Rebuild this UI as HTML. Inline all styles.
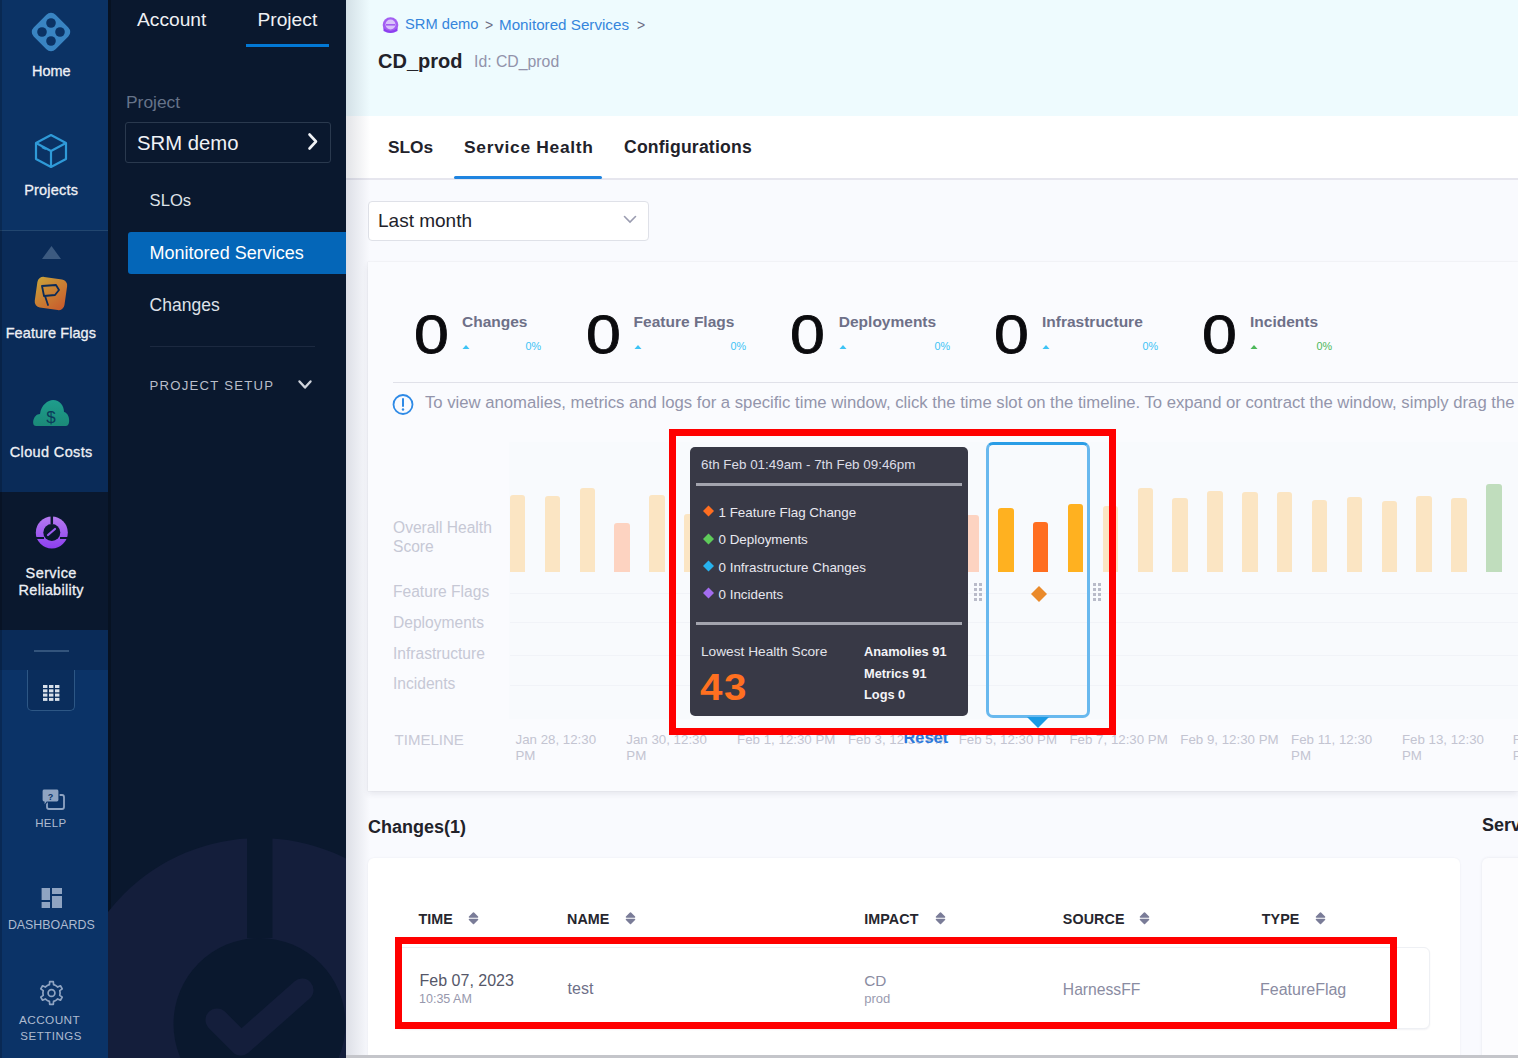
<!DOCTYPE html>
<html><head><meta charset="utf-8">
<style>
html,body{margin:0;padding:0;}
body{width:1518px;height:1058px;position:relative;overflow:hidden;background:#f9fafe;font-family:"Liberation Sans",sans-serif;}
.t{position:absolute;white-space:nowrap;}
.r{position:absolute;box-sizing:border-box;}
svg{position:absolute;overflow:visible;}
</style></head><body>

<div class="r" style="left:0px;top:0px;width:108px;height:230px;background:#0b3264"></div>
<div class="r" style="left:0px;top:230px;width:108px;height:1px;background:#22466f"></div>
<div class="r" style="left:0px;top:231px;width:108px;height:261px;background:#0a2b58"></div>
<div class="r" style="left:0px;top:492px;width:108px;height:138px;background:#0a182e"></div>
<div class="r" style="left:0px;top:630px;width:108px;height:40px;background:#0a2b58"></div>
<div class="r" style="left:0px;top:670px;width:108px;height:388px;background:#0b3367"></div>
<div class="r" style="left:0px;top:0px;width:2px;height:1058px;background:rgba(0,0,0,0.18)"></div>
<svg style="left:0;top:0px" width="108" height="120" viewBox="0 0 108 120">
<g transform="translate(51,32) rotate(45)">
<rect x="-15.5" y="-15.5" width="31" height="31" rx="6.5" fill="#3984c2"/>
</g>
<circle cx="51" cy="23" r="4.8" fill="#0b3264"/>
<circle cx="42" cy="32" r="4.8" fill="#0b3264"/>
<circle cx="60" cy="32" r="4.8" fill="#0b3264"/>
<circle cx="51" cy="41" r="4.8" fill="#0b3264"/>
</svg>
<div class="t" style="left:32.0px;top:63.7px;font-size:14.5px;line-height:14.5px;color:#eef0f5;font-weight:400;letter-spacing:0px;-webkit-text-stroke:0.3px #eef0f5">Home</div>
<svg style="left:0;top:120px" width="108" height="60" viewBox="0 120 108 60">
<g fill="none" stroke="#2f9ad8" stroke-width="2.2" stroke-linejoin="round">
<path d="M51 135 L66 143 L66 159 L51 167 L36 159 L36 143 Z"/>
<path d="M36 143 L51 151 L66 143 M51 151 L51 167"/>
<path d="M42 147 L46 149"/>
</g></svg>
<div class="t" style="left:24.2px;top:183.4px;font-size:14.5px;line-height:14.5px;color:#eef0f5;font-weight:400;letter-spacing:0.2px;-webkit-text-stroke:0.3px #eef0f5">Projects</div>
<svg style="left:0;top:240px" width="108" height="30" viewBox="0 240 108 30"><path d="M42 259 L51.5 246 L61 259 Z" fill="#3c5a80"/></svg>
<svg style="left:0;top:270px" width="108" height="45" viewBox="0 270 108 45">
<defs><linearGradient id="ffg" x1="0" y1="0" x2="1" y2="1"><stop offset="0" stop-color="#c9a43a"/><stop offset="1" stop-color="#c9582c"/></linearGradient></defs>
<g transform="translate(51,293) rotate(8)"><rect x="-15" y="-15" width="30" height="31" rx="6" fill="url(#ffg)"/></g>
<g fill="none" stroke="#0b2b58" stroke-width="1.8" stroke-linejoin="round" stroke-linecap="round">
<path d="M42 286 L56 285 L59 290 L55 295 L44 296 Z"/><path d="M45 296 L48 305"/>
</g></svg>
<div class="t" style="left:5.7px;top:325.9px;font-size:14.5px;line-height:14.5px;color:#eef0f5;font-weight:400;letter-spacing:0.07px;-webkit-text-stroke:0.3px #eef0f5">Feature Flags</div>
<svg style="left:0;top:395px" width="108" height="35" viewBox="0 395 108 35">
<defs><linearGradient id="ccg" x1="0" y1="0" x2="0" y2="1"><stop offset="0" stop-color="#1f9d8c"/><stop offset="1" stop-color="#1b8a78"/></linearGradient></defs>
<path d="M36 426 C31 426 33 414 40 414 C41 405 48 400 53 400 C60 400 64 406 64 412 C70 413 71 426 66 426 Z" fill="url(#ccg)"/>
<text x="51" y="423" text-anchor="middle" font-family="Liberation Sans" font-size="17" fill="#0b3a5a" font-weight="400">$</text>
</svg>
<div class="t" style="left:9.8px;top:445.3px;font-size:14.5px;line-height:14.5px;color:#eef0f5;font-weight:400;letter-spacing:0.35px;-webkit-text-stroke:0.3px #eef0f5">Cloud Costs</div>
<svg style="left:0;top:510px" width="108" height="45" viewBox="0 510 108 45">
<defs><linearGradient id="srg" x1="0" y1="0" x2="0" y2="1"><stop offset="0" stop-color="#b57bf0"/><stop offset="1" stop-color="#8d3ff0"/></linearGradient></defs>
<circle cx="51.8" cy="532.5" r="16" fill="url(#srg)"/>
<circle cx="51.8" cy="532.5" r="8.5" fill="#0a182e"/>
<path d="M51.8 516 L51.8 524" stroke="#0a182e" stroke-width="2.5"/>
<path d="M36 538 L44 538 M60 538 L68 538" stroke="#0a182e" stroke-width="2"/>
<path d="M48 535 L55 529" stroke="#9c5cf0" stroke-width="2.2" stroke-linecap="round"/>
</svg>
<div class="t" style="left:25.6px;top:565.5px;font-size:14.5px;line-height:14.5px;color:#eef0f5;font-weight:400;letter-spacing:0.4px;-webkit-text-stroke:0.3px #eef0f5">Service</div>
<div class="t" style="left:18.5px;top:582.7px;font-size:14.5px;line-height:14.5px;color:#eef0f5;font-weight:400;letter-spacing:0.3px;-webkit-text-stroke:0.3px #eef0f5">Reliability</div>
<div class="r" style="left:34px;top:650px;width:35px;height:2px;background:#33547c"></div>
<div class="r" style="left:27px;top:670px;width:48px;height:41px;border:1px solid #2d5785;border-top:none;border-radius:0 0 5px 5px;background:#0a2d5c"></div>
<svg style="left:0;top:680px" width="108" height="30" viewBox="0 680 108 30"><g fill="#d8e0ea"><rect x="43" y="685.0" width="4.4" height="3" /><rect x="49" y="685.0" width="4.4" height="3" /><rect x="55" y="685.0" width="4.4" height="3" /><rect x="43" y="689.3" width="4.4" height="3" /><rect x="49" y="689.3" width="4.4" height="3" /><rect x="55" y="689.3" width="4.4" height="3" /><rect x="43" y="693.6" width="4.4" height="3" /><rect x="49" y="693.6" width="4.4" height="3" /><rect x="55" y="693.6" width="4.4" height="3" /><rect x="43" y="697.9" width="4.4" height="3" /><rect x="49" y="697.9" width="4.4" height="3" /><rect x="55" y="697.9" width="4.4" height="3" /></g></svg>
<svg style="left:0;top:785px" width="108" height="30" viewBox="0 785 108 30">
<path d="M47 795 L62 795 Q64 795 64 797 L64 807 Q64 809 62 809 L49 809 Q47 809 47 807 Z" fill="none" stroke="#8fa4c2" stroke-width="1.8"/>
<path d="M44 789 L57 789 Q59 789 59 791 L59 800 Q59 802 57 802 L47 802 L44 806 L44 802 Q42 802 42 800 L42 791 Q42 789 44 789 Z" fill="#8fa4c2" stroke="#0b3367" stroke-width="1.2"/>
<text x="50.5" y="799.5" text-anchor="middle" font-family="Liberation Sans" font-size="9" font-weight="700" fill="#0b3367">?</text>
</svg>
<div class="t" style="left:35.2px;top:817.9px;font-size:11.5px;line-height:11.5px;color:#aebbd0;font-weight:400;letter-spacing:0.3px">HELP</div>
<svg style="left:0;top:885px" width="108" height="30" viewBox="0 885 108 30"><g fill="#8fa4c2">
<rect x="41.6" y="888" width="8.4" height="12"/><rect x="52" y="888" width="10" height="6"/>
<rect x="52" y="896" width="10" height="12"/><rect x="41.6" y="902" width="8.4" height="6"/></g></svg>
<div class="t" style="left:7.9px;top:918.5px;font-size:12.4px;line-height:12.4px;color:#aebbd0;font-weight:400;">DASHBOARDS</div>
<svg style="left:0;top:978px" width="108" height="30" viewBox="0 978 108 30">
<path d="M47.20 985.55 L49.42 984.66 L49.70 981.64 L53.30 981.64 L53.58 984.66 L55.80 985.55 L57.69 987.03 L60.44 985.76 L62.24 988.88 L59.77 990.63 L60.10 993.00 L59.77 995.37 L62.24 997.12 L60.44 1000.24 L57.69 998.97 L55.80 1000.45 L53.58 1001.34 L53.30 1004.36 L49.70 1004.36 L49.42 1001.34 L47.20 1000.45 L45.31 998.97 L42.56 1000.24 L40.76 997.12 L43.23 995.37 L42.90 993.00 L43.23 990.63 L40.76 988.88 L42.56 985.76 L45.31 987.03 Z" fill="none" stroke="#8fa4c2" stroke-width="1.7" stroke-linejoin="round"/>
<circle cx="51.5" cy="993" r="3.4" fill="none" stroke="#8fa4c2" stroke-width="1.7"/></svg>
<div class="t" style="left:19.0px;top:1014.8px;font-size:11.8px;line-height:11.8px;color:#aebbd0;font-weight:400;letter-spacing:0.4px">ACCOUNT</div>
<div class="t" style="left:20.3px;top:1031.1px;font-size:11.5px;line-height:11.5px;color:#aebbd0;font-weight:400;letter-spacing:0.5px">SETTINGS</div>
<div class="r" style="left:108px;top:0px;width:238px;height:1058px;background:#0a182e"></div>
<div class="r" style="left:108px;top:0px;width:3px;height:1058px;background:rgba(0,0,0,0.25)"></div>
<svg style="left:108px;top:780px" width="238" height="278" viewBox="108 780 238 278">
<defs><clipPath id="sbclip"><rect x="108" y="780" width="238" height="278"/></clipPath></defs>
<g clip-path="url(#sbclip)">
<circle cx="259.5" cy="1030" r="192" fill="#141e3b"/>
<rect x="247" y="820" width="25.5" height="118" fill="#0a182e"/>
<circle cx="259.5" cy="1024" r="86" fill="#0a182e"/>
<path d="M217 1020 L241 1044 L302 990" fill="none" stroke="#141e3b" stroke-width="23" stroke-linecap="round" stroke-linejoin="round"/>
</g></svg>
<div class="t" style="left:137.0px;top:10.2px;font-size:19.2px;line-height:19.2px;color:#eef0f4;font-weight:400;">Account</div>
<div class="t" style="left:257.5px;top:10.2px;font-size:19.2px;line-height:19.2px;color:#eef0f4;font-weight:400;">Project</div>
<div class="r" style="left:246px;top:44px;width:83px;height:3px;background:#0278d5"></div>
<div class="t" style="left:126.0px;top:94.0px;font-size:17.4px;line-height:17.4px;color:#667389;font-weight:400;">Project</div>
<div class="r" style="left:125px;top:122px;width:206px;height:41px;border:1px solid #2a394e;border-radius:3px"></div>
<div class="t" style="left:137.0px;top:132.8px;font-size:20.3px;line-height:20.3px;color:#f0f2f6;font-weight:400;">SRM demo</div>
<svg style="left:300px;top:130px" width="24" height="24" viewBox="300 130 24 24"><path d="M309.5 134.5 L316 141.5 L309.5 148.5" fill="none" stroke="#f0f2f6" stroke-width="2.6" stroke-linecap="round" stroke-linejoin="round"/></svg>
<div class="t" style="left:149.6px;top:192.9px;font-size:16.6px;line-height:16.6px;color:#dfe2e8;font-weight:400;">SLOs</div>
<div class="r" style="left:128px;top:232px;width:218px;height:42px;background:#0466b8;border-radius:3px 0 0 3px"></div>
<div class="t" style="left:149.6px;top:244.2px;font-size:18px;line-height:18px;color:#ffffff;font-weight:400;">Monitored Services</div>
<div class="t" style="left:149.6px;top:297.2px;font-size:17.5px;line-height:17.5px;color:#dfe2e8;font-weight:400;">Changes</div>
<div class="r" style="left:150px;top:346px;width:165px;height:1px;background:#1c2940"></div>
<div class="t" style="left:149.6px;top:378.8px;font-size:13.2px;line-height:13.2px;color:#b9bec9;font-weight:400;letter-spacing:1.2px">PROJECT SETUP</div>
<svg style="left:290px;top:375px" width="30" height="20" viewBox="290 375 30 20"><path d="M299.5 381.5 L305 387.5 L310.5 381.5" fill="none" stroke="#d0d4dc" stroke-width="2.4" stroke-linecap="round" stroke-linejoin="round"/></svg>
<div class="r" style="left:346px;top:0px;width:1172px;height:116px;background:#eefbfe"></div>
<div class="r" style="left:346px;top:116px;width:1172px;height:62px;background:#ffffff"></div>
<div class="r" style="left:346px;top:178px;width:1172px;height:2px;background:#e6e6ee"></div>
<svg style="left:380px;top:15px" width="22" height="22" viewBox="380 15 22 22">
<circle cx="390.5" cy="25" r="7.8" fill="#a35ef2"/>
<circle cx="390.5" cy="24.5" r="5" fill="#d9c2fb"/>
<path d="M386 24.8 L395 24.8" stroke="#a35ef2" stroke-width="1.6"/>
<path d="M383.5 28 Q390.5 34 397.5 28 L397.5 31 Q390.5 35 383.5 31 Z" fill="#8c3ff0"/></svg>
<div class="t" style="left:405.0px;top:17.1px;font-size:14.7px;line-height:14.7px;color:#3585dc;font-weight:400;">SRM demo</div>
<div class="t" style="left:485.0px;top:17.6px;font-size:14px;line-height:14px;color:#6b6d85;font-weight:400;">&gt;</div>
<div class="t" style="left:499.0px;top:16.6px;font-size:15.2px;line-height:15.2px;color:#3585dc;font-weight:400;">Monitored Services</div>
<div class="t" style="left:637.0px;top:17.6px;font-size:14px;line-height:14px;color:#6b6d85;font-weight:400;">&gt;</div>
<div class="t" style="left:378.0px;top:50.6px;font-size:20px;line-height:20px;color:#22222a;font-weight:700;">CD_prod</div>
<div class="t" style="left:474.0px;top:53.6px;font-size:15.8px;line-height:15.8px;color:#9293ab;font-weight:400;">Id: CD_prod</div>
<div class="t" style="left:388.0px;top:139.4px;font-size:17.3px;line-height:17.3px;color:#22222a;font-weight:700;">SLOs</div>
<div class="t" style="left:464.0px;top:139.3px;font-size:17.4px;line-height:17.4px;color:#22222a;font-weight:700;letter-spacing:0.7px">Service Health</div>
<div class="t" style="left:624.0px;top:139.1px;font-size:17.6px;line-height:17.6px;color:#22222a;font-weight:700;letter-spacing:0.2px">Configurations</div>
<div class="r" style="left:454px;top:176px;width:148px;height:3px;background:#1f84e0;border-radius:2px"></div>
<div class="r" style="left:368px;top:201px;width:281px;height:40px;background:#fff;border:1px solid #dfe1e8;border-radius:4px"></div>
<div class="t" style="left:378.0px;top:211.3px;font-size:19px;line-height:19px;color:#22222a;font-weight:400;">Last month</div>
<svg style="left:620px;top:210px" width="20" height="20" viewBox="620 210 20 20"><path d="M624.5 216.5 L630 222 L635.5 216.5" fill="none" stroke="#9a9cb0" stroke-width="1.6" stroke-linecap="round"/></svg>
<div class="r" style="left:346px;top:0;width:24px;height:1058px;background:linear-gradient(90deg,rgba(20,30,60,0.12),rgba(20,30,60,0))"></div>
<div class="r" style="left:368px;top:262px;width:1150px;height:529px;background:#fafbfe;box-shadow:0 0 1px rgba(40,40,80,0.14),0 3px 6px rgba(40,40,80,0.09)"></div>
<div class="t" style="left:413.9px;top:307.3px;font-size:54px;line-height:54px;color:#0b0b0e;font-weight:400;transform:scaleX(1.16);transform-origin:0 0;-webkit-text-stroke:0.8px #0b0b0e">0</div>
<div class="t" style="left:462.0px;top:314.2px;font-size:15.5px;line-height:15.5px;color:#6e7088;font-weight:700;">Changes</div>
<svg style="left:462px;top:343px" width="10" height="8" viewBox="0 0 10 8"><path d="M0.5 6 L4 2 L7.5 6 Z" fill="#3dc3f5"/></svg>
<div class="t" style="right:977.0px;top:340.7px;font-size:10.8px;line-height:10.8px;color:#3dc3f5;font-weight:400;">0%</div>
<div class="t" style="left:585.5px;top:307.3px;font-size:54px;line-height:54px;color:#0b0b0e;font-weight:400;transform:scaleX(1.16);transform-origin:0 0;-webkit-text-stroke:0.8px #0b0b0e">0</div>
<div class="t" style="left:633.6px;top:314.2px;font-size:15.5px;line-height:15.5px;color:#6e7088;font-weight:700;">Feature Flags</div>
<svg style="left:633.6px;top:343px" width="10" height="8" viewBox="0 0 10 8"><path d="M0.5 6 L4 2 L7.5 6 Z" fill="#3dc3f5"/></svg>
<div class="t" style="right:772.0px;top:340.7px;font-size:10.8px;line-height:10.8px;color:#3dc3f5;font-weight:400;">0%</div>
<div class="t" style="left:789.5px;top:307.3px;font-size:54px;line-height:54px;color:#0b0b0e;font-weight:400;transform:scaleX(1.16);transform-origin:0 0;-webkit-text-stroke:0.8px #0b0b0e">0</div>
<div class="t" style="left:838.8px;top:314.2px;font-size:15.5px;line-height:15.5px;color:#6e7088;font-weight:700;">Deployments</div>
<svg style="left:838.8px;top:343px" width="10" height="8" viewBox="0 0 10 8"><path d="M0.5 6 L4 2 L7.5 6 Z" fill="#3dc3f5"/></svg>
<div class="t" style="right:568.0px;top:340.7px;font-size:10.8px;line-height:10.8px;color:#3dc3f5;font-weight:400;">0%</div>
<div class="t" style="left:993.9px;top:307.3px;font-size:54px;line-height:54px;color:#0b0b0e;font-weight:400;transform:scaleX(1.16);transform-origin:0 0;-webkit-text-stroke:0.8px #0b0b0e">0</div>
<div class="t" style="left:1042.0px;top:314.2px;font-size:15.5px;line-height:15.5px;color:#6e7088;font-weight:700;">Infrastructure</div>
<svg style="left:1042px;top:343px" width="10" height="8" viewBox="0 0 10 8"><path d="M0.5 6 L4 2 L7.5 6 Z" fill="#3dc3f5"/></svg>
<div class="t" style="right:360.0px;top:340.7px;font-size:10.8px;line-height:10.8px;color:#3dc3f5;font-weight:400;">0%</div>
<div class="t" style="left:1202.2px;top:307.3px;font-size:54px;line-height:54px;color:#0b0b0e;font-weight:400;transform:scaleX(1.16);transform-origin:0 0;-webkit-text-stroke:0.8px #0b0b0e">0</div>
<div class="t" style="left:1250.0px;top:314.2px;font-size:15.5px;line-height:15.5px;color:#6e7088;font-weight:700;">Incidents</div>
<svg style="left:1250px;top:343px" width="10" height="8" viewBox="0 0 10 8"><path d="M0.5 6 L4 2 L7.5 6 Z" fill="#4cb85a"/></svg>
<div class="t" style="right:186.0px;top:340.7px;font-size:10.8px;line-height:10.8px;color:#4cb85a;font-weight:400;">0%</div>
<div class="r" style="left:393px;top:382px;width:1125px;height:1px;background:#e0e1e9"></div>
<svg style="left:390px;top:392px" width="26" height="26" viewBox="390 392 26 26"><circle cx="403" cy="404.5" r="9.5" fill="none" stroke="#2e8ae6" stroke-width="1.8"/><path d="M403 399 L403 406" stroke="#2e8ae6" stroke-width="2" stroke-linecap="round"/><circle cx="403" cy="409.5" r="1.2" fill="#2e8ae6"/></svg>
<div class="t" style="left:425.0px;top:395.4px;font-size:16.7px;line-height:16.7px;color:#9395ab;font-weight:400;">To view anomalies, metrics and logs for a specific time window, click the time slot on the timeline. To expand or contract the window, simply drag the</div>
<div class="t" style="left:393.0px;top:519.8px;font-size:15.6px;line-height:15.6px;color:#c6c8d5;font-weight:400;">Overall Health</div>
<div class="t" style="left:393.0px;top:538.8px;font-size:15.6px;line-height:15.6px;color:#c6c8d5;font-weight:400;">Score</div>
<div class="t" style="left:393.0px;top:584.1px;font-size:15.6px;line-height:15.6px;color:#c6c8d5;font-weight:400;">Feature Flags</div>
<div class="t" style="left:393.0px;top:614.8px;font-size:15.6px;line-height:15.6px;color:#c6c8d5;font-weight:400;">Deployments</div>
<div class="t" style="left:393.0px;top:646.4px;font-size:15.6px;line-height:15.6px;color:#c6c8d5;font-weight:400;">Infrastructure</div>
<div class="t" style="left:393.0px;top:675.8px;font-size:15.6px;line-height:15.6px;color:#c6c8d5;font-weight:400;">Incidents</div>
<div class="r" style="left:509px;top:442px;width:1009px;height:277px;background:#f8fafd"></div>
<div class="r" style="left:510px;top:593px;width:1008px;height:1px;background:#f1f3f8"></div>
<div class="r" style="left:510px;top:622px;width:1008px;height:1px;background:#f1f3f8"></div>
<div class="r" style="left:510px;top:655px;width:1008px;height:1px;background:#f1f3f8"></div>
<div class="r" style="left:510px;top:685px;width:1008px;height:1px;background:#f1f3f8"></div>
<div class="r" style="left:509.8px;top:495px;width:15.5px;height:77px;background:#fbe5c3;border-radius:3px 3px 0 0"></div>
<div class="r" style="left:544.7px;top:496.4px;width:15.5px;height:75.60000000000002px;background:#fbe5c3;border-radius:3px 3px 0 0"></div>
<div class="r" style="left:579.5px;top:488.4px;width:15.5px;height:83.60000000000002px;background:#fbe5c3;border-radius:3px 3px 0 0"></div>
<div class="r" style="left:614.4px;top:522.7px;width:15.5px;height:49.299999999999955px;background:#fdd3c1;border-radius:3px 3px 0 0"></div>
<div class="r" style="left:649.3px;top:495px;width:15.5px;height:77px;background:#fbe5c3;border-radius:3px 3px 0 0"></div>
<div class="r" style="left:684.1px;top:514px;width:15.5px;height:58px;background:#fbe5c3;border-radius:3px 3px 0 0"></div>
<div class="r" style="left:719.0px;top:505px;width:15.5px;height:67px;background:#fbe5c3;border-radius:3px 3px 0 0"></div>
<div class="r" style="left:753.9px;top:505px;width:15.5px;height:67px;background:#fbe5c3;border-radius:3px 3px 0 0"></div>
<div class="r" style="left:788.8px;top:505px;width:15.5px;height:67px;background:#fbe5c3;border-radius:3px 3px 0 0"></div>
<div class="r" style="left:823.6px;top:505px;width:15.5px;height:67px;background:#fbe5c3;border-radius:3px 3px 0 0"></div>
<div class="r" style="left:858.5px;top:505px;width:15.5px;height:67px;background:#fbe5c3;border-radius:3px 3px 0 0"></div>
<div class="r" style="left:893.4px;top:505px;width:15.5px;height:67px;background:#fbe5c3;border-radius:3px 3px 0 0"></div>
<div class="r" style="left:928.2px;top:505px;width:15.5px;height:67px;background:#fbe5c3;border-radius:3px 3px 0 0"></div>
<div class="r" style="left:963.1px;top:515px;width:15.5px;height:57px;background:#fdd3c1;border-radius:3px 3px 0 0"></div>
<div class="r" style="left:998.0px;top:508px;width:15.5px;height:64px;background:#ffb120;border-radius:3px 3px 0 0"></div>
<div class="r" style="left:1032.8px;top:522px;width:15.5px;height:50px;background:#ff6e20;border-radius:3px 3px 0 0"></div>
<div class="r" style="left:1067.7px;top:504px;width:15.5px;height:68px;background:#ffb120;border-radius:3px 3px 0 0"></div>
<div class="r" style="left:1102.6px;top:506px;width:15.5px;height:66px;background:#fbe5c3;border-radius:3px 3px 0 0"></div>
<div class="r" style="left:1137.5px;top:488.4px;width:15.5px;height:83.60000000000002px;background:#fbe5c3;border-radius:3px 3px 0 0"></div>
<div class="r" style="left:1172.3px;top:498px;width:15.5px;height:74px;background:#fbe5c3;border-radius:3px 3px 0 0"></div>
<div class="r" style="left:1207.2px;top:491px;width:15.5px;height:81px;background:#fbe5c3;border-radius:3px 3px 0 0"></div>
<div class="r" style="left:1242.1px;top:492px;width:15.5px;height:80px;background:#fbe5c3;border-radius:3px 3px 0 0"></div>
<div class="r" style="left:1276.9px;top:492px;width:15.5px;height:80px;background:#fbe5c3;border-radius:3px 3px 0 0"></div>
<div class="r" style="left:1311.8px;top:500px;width:15.5px;height:72px;background:#fbe5c3;border-radius:3px 3px 0 0"></div>
<div class="r" style="left:1346.7px;top:497px;width:15.5px;height:75px;background:#fbe5c3;border-radius:3px 3px 0 0"></div>
<div class="r" style="left:1381.5px;top:501px;width:15.5px;height:71px;background:#fbe5c3;border-radius:3px 3px 0 0"></div>
<div class="r" style="left:1416.4px;top:496px;width:15.5px;height:76px;background:#fbe5c3;border-radius:3px 3px 0 0"></div>
<div class="r" style="left:1451.3px;top:498px;width:15.5px;height:74px;background:#fbe5c3;border-radius:3px 3px 0 0"></div>
<div class="r" style="left:1486.2px;top:484px;width:15.5px;height:88px;background:#c0ddbd;border-radius:3px 3px 0 0"></div>
<div class="t" style="left:394.6px;top:731.5px;font-size:15px;line-height:15px;color:#c8c9d6;font-weight:400;">TIMELINE</div>
<div class="t" style="left:515.5px;top:733.3px;font-size:13.3px;line-height:13.3px;color:#c3c4d1;font-weight:400;">Jan 28, 12:30</div>
<div class="t" style="left:515.5px;top:748.7px;font-size:13.3px;line-height:13.3px;color:#c3c4d1;font-weight:400;">PM</div>
<div class="t" style="left:626.3px;top:733.3px;font-size:13.3px;line-height:13.3px;color:#c3c4d1;font-weight:400;">Jan 30, 12:30</div>
<div class="t" style="left:626.3px;top:748.7px;font-size:13.3px;line-height:13.3px;color:#c3c4d1;font-weight:400;">PM</div>
<div class="t" style="left:737.1px;top:733.3px;font-size:13.3px;line-height:13.3px;color:#c3c4d1;font-weight:400;">Feb 1, 12:30 PM</div>
<div class="t" style="left:847.9px;top:733.3px;font-size:13.3px;line-height:13.3px;color:#c3c4d1;font-weight:400;">Feb 3, 12:30 PM</div>
<div class="t" style="left:958.7px;top:733.3px;font-size:13.3px;line-height:13.3px;color:#c3c4d1;font-weight:400;">Feb 5, 12:30 PM</div>
<div class="t" style="left:1069.5px;top:733.3px;font-size:13.3px;line-height:13.3px;color:#c3c4d1;font-weight:400;">Feb 7, 12:30 PM</div>
<div class="t" style="left:1180.3px;top:733.3px;font-size:13.3px;line-height:13.3px;color:#c3c4d1;font-weight:400;">Feb 9, 12:30 PM</div>
<div class="t" style="left:1291.1px;top:733.3px;font-size:13.3px;line-height:13.3px;color:#c3c4d1;font-weight:400;">Feb 11, 12:30</div>
<div class="t" style="left:1291.1px;top:748.7px;font-size:13.3px;line-height:13.3px;color:#c3c4d1;font-weight:400;">PM</div>
<div class="t" style="left:1401.9px;top:733.3px;font-size:13.3px;line-height:13.3px;color:#c3c4d1;font-weight:400;">Feb 13, 12:30</div>
<div class="t" style="left:1401.9px;top:748.7px;font-size:13.3px;line-height:13.3px;color:#c3c4d1;font-weight:400;">PM</div>
<div class="t" style="left:1512.7px;top:733.3px;font-size:13.3px;line-height:13.3px;color:#c3c4d1;font-weight:400;">Feb 15, 12:30</div>
<div class="t" style="left:1512.7px;top:748.7px;font-size:13.3px;line-height:13.3px;color:#c3c4d1;font-weight:400;">PM</div>
<div class="t" style="left:903.5px;top:728.6px;font-size:16.4px;line-height:16.4px;color:#2a78dc;font-weight:700;">Reset</div>
<div class="r" style="left:986px;top:442px;width:104px;height:276px;border:3px solid #68b8ee;border-top-color:#2a9de6;border-radius:7px"></div>
<svg style="left:1020px;top:714px" width="40" height="20" viewBox="1020 714 40 20"><path d="M1027 717 L1049 717 L1038 728 Z" fill="#1b9ae4"/></svg>
<svg style="left:0;top:0px" width="1518" height="1058" viewBox="0 0 1518 1058"><rect x="974" y="583" width="3" height="3" fill="#b9bbc9"/><rect x="979" y="583" width="3" height="3" fill="#b9bbc9"/><rect x="974" y="588" width="3" height="3" fill="#b9bbc9"/><rect x="979" y="588" width="3" height="3" fill="#b9bbc9"/><rect x="974" y="593" width="3" height="3" fill="#b9bbc9"/><rect x="979" y="593" width="3" height="3" fill="#b9bbc9"/><rect x="974" y="598" width="3" height="3" fill="#b9bbc9"/><rect x="979" y="598" width="3" height="3" fill="#b9bbc9"/><rect x="1093" y="583" width="3" height="3" fill="#b9bbc9"/><rect x="1098" y="583" width="3" height="3" fill="#b9bbc9"/><rect x="1093" y="588" width="3" height="3" fill="#b9bbc9"/><rect x="1098" y="588" width="3" height="3" fill="#b9bbc9"/><rect x="1093" y="593" width="3" height="3" fill="#b9bbc9"/><rect x="1098" y="593" width="3" height="3" fill="#b9bbc9"/><rect x="1093" y="598" width="3" height="3" fill="#b9bbc9"/><rect x="1098" y="598" width="3" height="3" fill="#b9bbc9"/><path d="M1039 586 L1047 594 L1039 602 L1031 594 Z" fill="#ea8a2b"/></svg>
<div class="r" style="left:690px;top:447px;width:278px;height:269px;background:#383946;border-radius:5px"></div>
<div class="t" style="left:701.0px;top:458.2px;font-size:13.4px;line-height:13.4px;color:#dcdde6;font-weight:400;">6th Feb 01:49am - 7th Feb 09:46pm</div>
<div class="r" style="left:696px;top:483px;width:266px;height:2.5px;background:#a3a4ae"></div>
<svg style="left:700px;top:503.4px" width="16" height="16" viewBox="0 0 16 16"><path d="M8.5 2.5 L14 8 L8.5 13.5 L3 8 Z" fill="#ff6e20"/></svg>
<div class="t" style="left:718.5px;top:506.1px;font-size:13.4px;line-height:13.4px;color:#e8e8ef;font-weight:400;">1 Feature Flag Change</div>
<svg style="left:700px;top:530.6px" width="16" height="16" viewBox="0 0 16 16"><path d="M8.5 2.5 L14 8 L8.5 13.5 L3 8 Z" fill="#5ecb5a"/></svg>
<div class="t" style="left:718.5px;top:533.3px;font-size:13.4px;line-height:13.4px;color:#e8e8ef;font-weight:400;">0 Deployments</div>
<svg style="left:700px;top:557.8px" width="16" height="16" viewBox="0 0 16 16"><path d="M8.5 2.5 L14 8 L8.5 13.5 L3 8 Z" fill="#27b2ee"/></svg>
<div class="t" style="left:718.5px;top:560.5px;font-size:13.4px;line-height:13.4px;color:#e8e8ef;font-weight:400;">0 Infrastructure Changes</div>
<svg style="left:700px;top:585.0px" width="16" height="16" viewBox="0 0 16 16"><path d="M8.5 2.5 L14 8 L8.5 13.5 L3 8 Z" fill="#a36df0"/></svg>
<div class="t" style="left:718.5px;top:587.7px;font-size:13.4px;line-height:13.4px;color:#e8e8ef;font-weight:400;">0 Incidents</div>
<div class="r" style="left:696px;top:622px;width:266px;height:2.5px;background:#a3a4ae"></div>
<div class="t" style="left:701.0px;top:645.4px;font-size:13.7px;line-height:13.7px;color:#e2e3ea;font-weight:400;">Lowest Health Score</div>
<div class="t" style="left:700.0px;top:670.3px;font-size:36px;line-height:36px;color:#ff7020;font-weight:700;letter-spacing:1.5px;transform:scaleX(1.12);transform-origin:0 0">43</div>
<div class="t" style="left:864.0px;top:646.2px;font-size:12.8px;line-height:12.8px;color:#f4f4f8;font-weight:700;">Anamolies 91</div>
<div class="t" style="left:864.0px;top:667.8px;font-size:12.8px;line-height:12.8px;color:#f4f4f8;font-weight:700;">Metrics 91</div>
<div class="t" style="left:864.0px;top:689.2px;font-size:12.8px;line-height:12.8px;color:#f4f4f8;font-weight:700;">Logs 0</div>
<div class="r" style="left:669px;top:429px;width:447px;height:306px;border:7px solid #ff0000"></div>
<div class="t" style="left:368.0px;top:817.5px;font-size:18px;line-height:18px;color:#22222a;font-weight:700;">Changes(1)</div>
<div class="t" style="left:1482.0px;top:816.1px;font-size:18px;line-height:18px;color:#22222a;font-weight:700;">Serv</div>
<div class="r" style="left:368px;top:858px;width:1092px;height:210px;background:#ffffff;border-radius:6px;box-shadow:0 0 2px rgba(40,40,80,0.08)"></div>
<div class="r" style="left:1482px;top:858px;width:60px;height:210px;background:#fcfcfe;border-radius:6px;box-shadow:0 0 3px rgba(40,40,80,0.10)"></div>
<div class="t" style="left:418.4px;top:912.4px;font-size:14.3px;line-height:14.3px;color:#26262e;font-weight:700;letter-spacing:0.1px">TIME</div>
<svg style="left:468px;top:911px" width="11" height="15" viewBox="0 0 11 15"><path d="M5.5 2 L9.5 6 L1.5 6 Z M1.5 8.5 L9.5 8.5 L5.5 12.5 Z" fill="#7a7c98" stroke="#7a7c98" stroke-width="1.6" stroke-linejoin="round"/></svg>
<div class="t" style="left:567.0px;top:912.4px;font-size:14.3px;line-height:14.3px;color:#26262e;font-weight:700;letter-spacing:0.1px">NAME</div>
<svg style="left:625px;top:911px" width="11" height="15" viewBox="0 0 11 15"><path d="M5.5 2 L9.5 6 L1.5 6 Z M1.5 8.5 L9.5 8.5 L5.5 12.5 Z" fill="#7a7c98" stroke="#7a7c98" stroke-width="1.6" stroke-linejoin="round"/></svg>
<div class="t" style="left:864.2px;top:912.4px;font-size:14.3px;line-height:14.3px;color:#26262e;font-weight:700;letter-spacing:0.1px">IMPACT</div>
<svg style="left:935.2px;top:911px" width="11" height="15" viewBox="0 0 11 15"><path d="M5.5 2 L9.5 6 L1.5 6 Z M1.5 8.5 L9.5 8.5 L5.5 12.5 Z" fill="#7a7c98" stroke="#7a7c98" stroke-width="1.6" stroke-linejoin="round"/></svg>
<div class="t" style="left:1062.8px;top:912.4px;font-size:14.3px;line-height:14.3px;color:#26262e;font-weight:700;letter-spacing:0.1px">SOURCE</div>
<svg style="left:1139px;top:911px" width="11" height="15" viewBox="0 0 11 15"><path d="M5.5 2 L9.5 6 L1.5 6 Z M1.5 8.5 L9.5 8.5 L5.5 12.5 Z" fill="#7a7c98" stroke="#7a7c98" stroke-width="1.6" stroke-linejoin="round"/></svg>
<div class="t" style="left:1261.7px;top:912.4px;font-size:14.3px;line-height:14.3px;color:#26262e;font-weight:700;letter-spacing:0.1px">TYPE</div>
<svg style="left:1315px;top:911px" width="11" height="15" viewBox="0 0 11 15"><path d="M5.5 2 L9.5 6 L1.5 6 Z M1.5 8.5 L9.5 8.5 L5.5 12.5 Z" fill="#7a7c98" stroke="#7a7c98" stroke-width="1.6" stroke-linejoin="round"/></svg>
<div class="r" style="left:397px;top:947px;width:1033px;height:82px;background:#fff;border:1px solid #eef0f4;border-radius:6px;box-shadow:0 1px 2px rgba(40,40,80,0.06)"></div>
<div class="t" style="left:419.6px;top:973.0px;font-size:16px;line-height:16px;color:#555769;font-weight:400;">Feb 07, 2023</div>
<div class="t" style="left:419.0px;top:992.7px;font-size:12.5px;line-height:12.5px;color:#9798ad;font-weight:400;">10:35 AM</div>
<div class="t" style="left:567.6px;top:981.4px;font-size:16px;line-height:16px;color:#6e7088;font-weight:400;">test</div>
<div class="t" style="left:864.2px;top:973.3px;font-size:15.3px;line-height:15.3px;color:#8a8ca2;font-weight:400;">CD</div>
<div class="t" style="left:864.2px;top:992.0px;font-size:13px;line-height:13px;color:#9a9bb0;font-weight:400;">prod</div>
<div class="t" style="left:1062.8px;top:981.5px;font-size:15.7px;line-height:15.7px;color:#8a8ca2;font-weight:400;">HarnessFF</div>
<div class="t" style="left:1260.0px;top:981.5px;font-size:16px;line-height:16px;color:#8a8ca2;font-weight:400;">FeatureFlag</div>
<div class="r" style="left:395px;top:936.5px;width:1002px;height:92px;border:7px solid #ff0000"></div>
<div class="r" style="left:346px;top:1055px;width:1172px;height:3px;background:#c4c5ca"></div>
</body></html>
